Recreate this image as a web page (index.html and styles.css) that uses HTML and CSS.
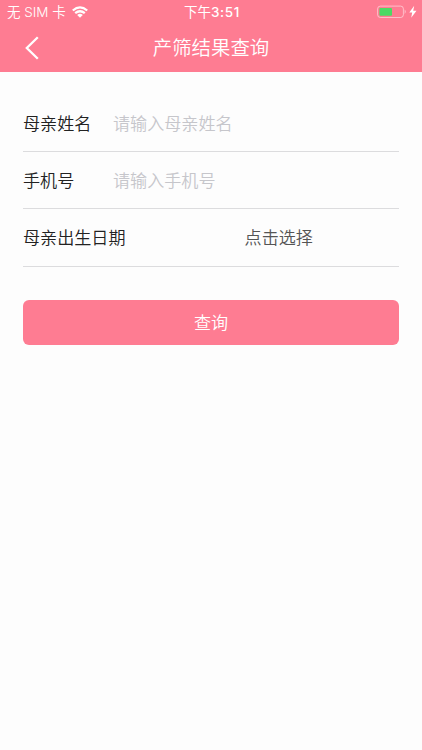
FILE: index.html
```html
<!DOCTYPE html>
<html lang="zh-CN">
  <head>
    <meta charset="UTF-8" />
    <meta name="viewport" content="width=device-width, initial-scale=1.0" />
    <title>产筛结果查询</title>
    <link rel="stylesheet" href="styles.css">
  </head>
  <body>
    <header class="header">
      <div class="status-bar">
        <div class="carrier">
          <span>无 SIM 卡</span>
          <svg class="wifi" width="16" height="12" viewBox="0 0 16 12">
            <g fill="none" stroke="#fff" stroke-width="2.3">
              <path d="M0.8 4.5 Q8 -1.7 15.2 4.5" />
              <path d="M3.2 7.2 Q8 3.2 12.8 7.2" />
            </g>
            <path d="M5.2 8.9 Q8 6.8 10.8 8.9 L8 11.7 Z" fill="#fff" />
          </svg>
        </div>
        <div class="time">下午<span class="clock">3:51</span></div>
        <div class="battery">
          <svg width="40" height="14" viewBox="0 0 40 14">
            <rect x="0.6" y="1.1" width="25.8" height="11.4" rx="2.8" fill="none" stroke="#fff" stroke-opacity="0.5" />
            <rect x="2.4" y="2.9" width="12.6" height="7.9" rx="1" fill="#4cd964" />
            <path d="M27.6 4.6 Q30 6.8 27.6 9 Z" fill="#fff" fill-opacity="0.5" />
            <path d="M37.2 0.8 L32.3 7.5 H35.2 L34.2 12.8 L39.5 5.7 H36.2 Z" fill="#fff" />
          </svg>
        </div>
      </div>
      <div class="nav-bar">
        <a class="back" href="#" aria-label="返回">
          <svg width="14" height="24" viewBox="0 0 14 24">
            <path d="M12.8 1.2 L1.8 12 L12.8 22.8" fill="none" stroke="#fff" stroke-width="2.3" />
          </svg>
        </a>
        <h1 class="title">产筛结果查询</h1>
      </div>
    </header>

    <form class="form">
      <div class="row">
        <label class="label" for="name">母亲姓名</label>
        <input class="input" id="name" type="text" placeholder="请输入母亲姓名" />
      </div>
      <div class="row">
        <label class="label" for="phone">手机号</label>
        <input class="input" id="phone" type="tel" placeholder="请输入手机号" />
      </div>
      <div class="row">
        <span class="label">母亲出生日期</span>
        <span class="picker">点击选择</span>
      </div>
      <button class="submit" type="button">查询</button>
    </form>
  </body>
</html>
```

FILE: styles.css
```css
* {
  box-sizing: border-box;
}

body {
  margin: 0;
  min-height: 100vh;
  background-color: #fdfdfd;
  color: #222;
  font-family: "Noto Sans CJK SC", sans-serif;
  font-size: 17.1px;
  font-weight: 350;
}

.header {
  height: 72px;
  background-color: #fe7c92;
  color: #fff;
}

.status-bar {
  display: grid;
  grid-template-columns: 1fr auto 1fr;
  align-items: center;
  height: 24px;
  padding: 0 5px 0 7px;
  font-family: Inter, "Noto Sans CJK SC", sans-serif;
  font-size: 13.5px;
  line-height: 24px;
}

.carrier {
  display: flex;
  align-items: center;
  gap: 6px;
}

.time {
  font-weight: 400;
}

.clock {
  font-weight: 500;
  letter-spacing: 0.6px;
}

.battery {
  display: flex;
  justify-content: flex-end;
}

.nav-bar {
  display: grid;
  grid-template-columns: 60px 1fr 60px;
  align-items: center;
  height: 48px;
}

.back {
  display: flex;
  padding-left: 25px;
}

.title {
  margin: 0;
  padding-bottom: 2px;
  font-size: 19.4px;
  font-weight: 350;
  line-height: 46px;
  text-align: center;
}

.form {
  padding: 23px 23px 0;
}

.row {
  display: flex;
  align-items: center;
  height: 57.2px;
  padding-bottom: 2px;
  border-bottom: 1px solid #dcdcde;
}

.label {
  flex-shrink: 0;
  min-width: 90px;
}

.input {
  flex: 1;
  min-width: 0;
  padding: 0;
  border: 0;
  outline: 0;
  background: transparent;
  color: #222;
  font: inherit;
}

.input::placeholder {
  color: #c6c6cb;
}

.picker {
  flex: 1;
  padding-left: 33px;
  color: #555;
  text-align: center;
}

.submit {
  display: block;
  width: 100%;
  height: 45px;
  margin-top: 33.4px;
  padding: 0 0 2px;
  border: 0;
  border-radius: 6px;
  background-color: #fe7c92;
  color: #fff;
  font: inherit;
}
```
